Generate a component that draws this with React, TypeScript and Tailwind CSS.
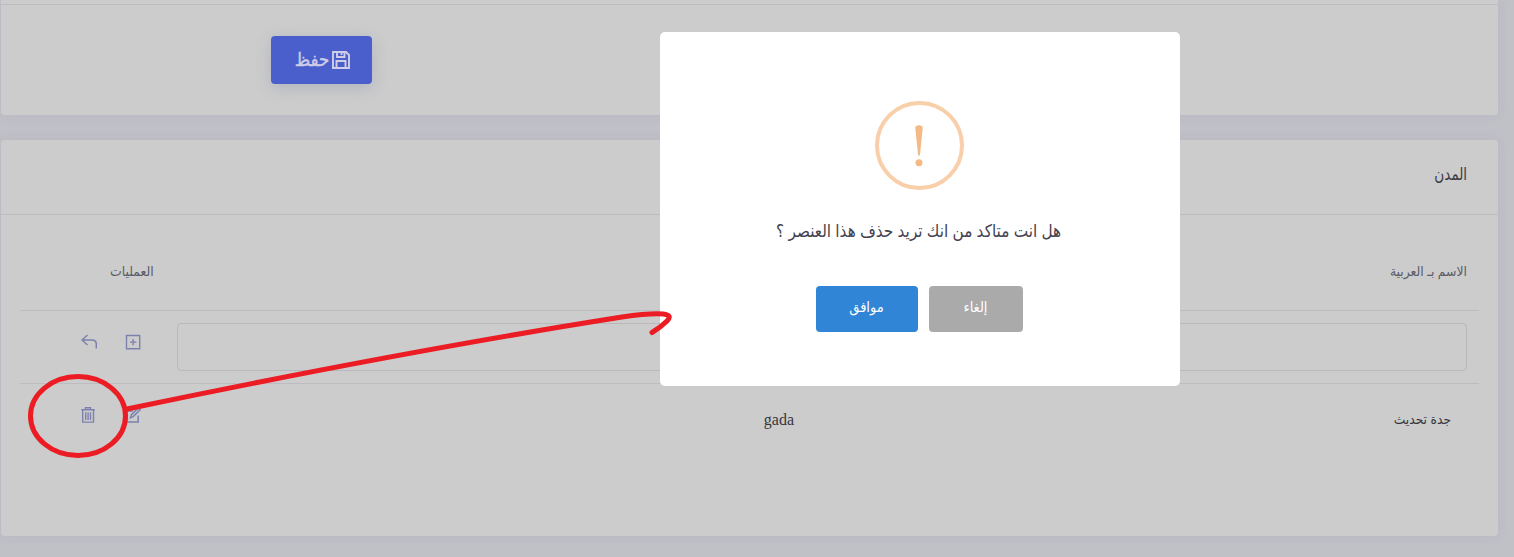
const F = "font-['Liberation_Serif','DejaVu_Sans_Condensed','DejaVu_Sans',serif]";

function SaveIcon() {
  return (
    <svg className="h-[18px] w-[18px] shrink-0" viewBox="0 0 18 18" fill="none" stroke="#cfcde8" strokeWidth="1.9">
      <path d="M1 1h13L17 4v13H1zM5 1v5h7.500V1M9.500 1.500v2.500M4.500 17v-7h9v7" />
    </svg>
  );
}

function UndoIcon() {
  return (
    <svg className="h-4 w-4" viewBox="0 0 16 16" fill="none" stroke="#7d81ad" strokeWidth="1.5">
      <path d="M6.500 1L1 6l5.500 5M1 6h10q4.300 0 4.300 4.300v4.200" />
    </svg>
  );
}

function AddIcon() {
  return (
    <svg className="h-4 w-4" viewBox="0 0 16 16" fill="none" stroke="#7d81ad" strokeWidth="1.4">
      <path d="M1.500 1.500h13.200v13.200H1.500zM8.100 5v6.300M5 8.100h6.300" />
    </svg>
  );
}

function TrashIcon() {
  return (
    <svg className="h-4 w-4" viewBox="0 0 16 16" fill="none" stroke="#7d81ad" strokeWidth="1.4">
      <path d="M2.700 3.500v11.600h10.800V3.500M1.300 2.800h13.500M5.500 2.600V.8h5v1.800M5.700 5.200v7.800M8.100 5.200v7.800M10.500 5.200v7.800" />
    </svg>
  );
}

function EditIcon() {
  return (
    <svg className="h-4 w-4" viewBox="0 0 16 16" fill="none" stroke="#7d81ad" strokeWidth="1.5">
      <path d="M8 4H1.500v11h11.700V8.500M5.500 10.700l1-3 7-6.700 1.700 1.700-7 6.900z" />
    </svg>
  );
}

export default function App() {
  return (
    <div dir="rtl" className={`relative h-[557px] w-[1514px] overflow-hidden bg-[#c0c0c7] pr-4 ${F}`}>
      <div className="flex w-[1497px] flex-col gap-[25px]">
        <section className="h-[115px] rounded-b bg-[#cccccc] shadow-[0_0_13px_rgba(82,63,105,0.06)]">
          <div className="h-[5px] border-b border-[#bdbdc1]" />
          <div className="flex justify-end pt-[31px] pl-[270px]">
            <button className="flex h-12 w-[101px] items-center justify-center gap-[3px] rounded bg-[#4a5fcc] pl-0.5 text-[#cfcde8] shadow-[0_4px_16px_rgba(77,89,149,0.2)]">
              <SaveIcon />
              <span className="text-[18.5px] leading-none [-webkit-text-stroke:0.4px_#cfcde8]">حفظ</span>
            </button>
          </div>
        </section>
        <section className="h-[396px] rounded bg-[#cccccc] shadow-[0_0_13px_rgba(82,63,105,0.06)]">
          <header className="flex h-[75px] items-center border-b border-[#bdbdc1] pr-[31px] pb-1">
            <h3 className="origin-right scale-x-[0.86] text-[17.5px] leading-none text-[#3a3a45]">المدن</h3>
          </header>
          <div className="px-[19px] pt-5">
            <div className="flex h-[76px] items-center justify-between border-b border-[#bdbdc1] pr-3 pl-[90px] text-[13.8px] text-[#5a5b66]">
              <span>الاسم بـ العربية</span>
              <span>العمليات</span>
            </div>
            <div className="flex h-[73px] items-center border-b border-[#bdbdc1] pr-3">
              <div className="h-12 w-[1290px] rounded border border-[#b8b8bd]" />
              <div className="mr-[36px] flex items-center gap-[28px] pb-[10px]">
                <AddIcon />
                <UndoIcon />
              </div>
            </div>
            <div className="flex h-[73px] items-center pr-7 text-[#36363c]">
              <span className="w-[657px] text-[13.7px]">جدة تحديث</span>
              <span className="w-[653px] pb-0.5 text-[16px]">gada</span>
              <div className="flex gap-[29px] pb-3">
                <EditIcon />
                <TrashIcon />
              </div>
            </div>
          </div>
        </section>
      </div>
      <div role="dialog" className="absolute top-8 left-[660px] flex h-[354px] w-[520px] flex-col items-center rounded-[5px] bg-white pt-[69px] pr-0.5">
        <div className="flex h-[89px] w-[89px] items-center justify-center rounded-full border-4 border-[#f9cfaa]">
          <svg className="h-[42px] w-2" viewBox="0 0 8 42" fill="#f5b985">
            <path d="M.3 3Q.3.300 4 .3T7.700 3L4.900 30.500H3.100z" />
            <circle cx="4" cy="37.700" r="3.500" />
          </svg>
        </div>
        <p className="mt-[27px] flex h-7 scale-x-[0.972] items-center text-[17.5px] whitespace-nowrap text-[#45424f]">هل انت متاكد من انك تريد حذف هذا العنصر ؟</p>
        <div className="mt-[41px] flex gap-[11px] text-[14.5px] text-white">
          <button className="h-[46px] w-[94px] rounded bg-[#aaaaaa] pb-0.5">إلغاء</button>
          <button className="h-[46px] w-[102px] rounded bg-[#3085d6] pb-0.5">موافق</button>
        </div>
      </div>
      <svg className="pointer-events-none absolute inset-0 h-full w-full" viewBox="0 0 1514 557" fill="none" stroke="#ec1c24" strokeWidth="5" strokeLinecap="round">
        <ellipse cx="78" cy="416" rx="47.500" ry="39.500" />
        <path d="M127 409Q400 352 622 317Q650 313 663 314Q673 315 667 321Q661 327 652 332.500" />
      </svg>
    </div>
  );
}
